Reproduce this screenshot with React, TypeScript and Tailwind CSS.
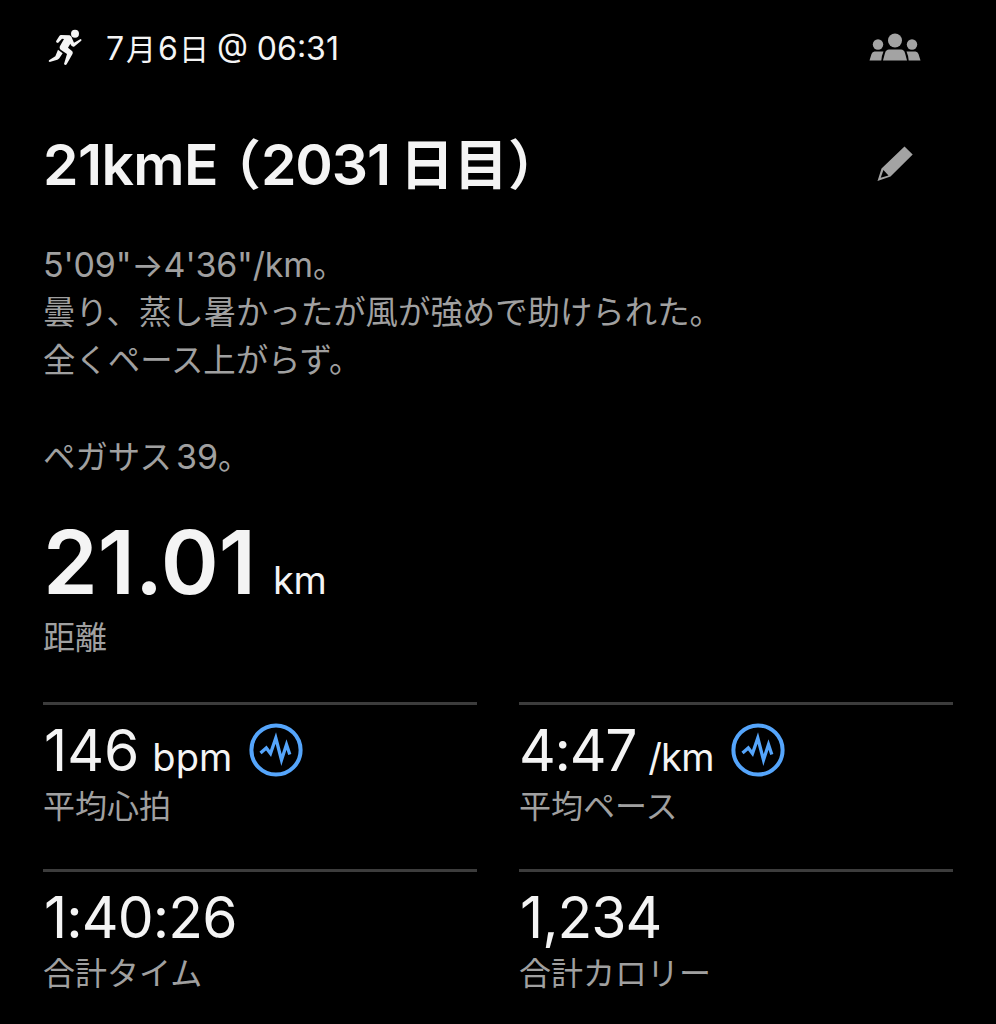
import type { ReactNode } from 'react';

const stats = [
  { id: 1, value: '146', unit: 'bpm', label: '平均心拍', badge: true, valueClass: 'pl-px', unitClass: '-ml-px' },
  { id: 2, value: '4:47', unit: '/km', label: '平均ペース', badge: true, valueClass: 'tracking-[-1.300px]', unitClass: '-ml-[2px] tracking-[-0.700px]' },
  { id: 3, value: '1:40:26', label: '合計タイム', badge: false, valueClass: 'pl-px tracking-[-0.900px]', unitClass: '' },
  { id: 4, value: '1,234', label: '合計カロリー', badge: false, valueClass: 'pl-px tracking-[-1px]', unitClass: '' },
];

function RunnerIcon() {
  return (
    <svg className="w-[34px] h-[36px] shrink-0" viewBox="0 0 102 108" fill="#f4f4f4">
      <circle cx="81" cy="14.500" r="12" />
      <path d="M39 18 L65 19 Q72 22 73 30 L78 41 L98 30 Q103 32 98 37 L78 53 Q73 54 69 49 L67 44 L60 56 L72 66 Q76 70 73 76 L56 106 Q52 110 48 105 L57 75 L38 62 Q33 57 36 51 L48 30 L42 29 L30 42 Q24 42 24 37 L34 21 Q36 18 39 18 Z" />
      <path d="M30 62 L44 73 L34 88 Q32 91 28 92 L5 99 Q0 98 3 94 L22 82 Z" />
    </svg>
  );
}

function PeopleIcon() {
  return (
    <svg className="w-[52px] h-7" viewBox="0 0 52 28" fill="#a3a3a3">
      <circle cx="26" cy="7.500" r="7" />
      <circle cx="9" cy="11.500" r="5.200" />
      <circle cx="43" cy="11.500" r="5.200" />
      <path d="M20 16.500 H32 Q35 16.500 36 20 L38 27.500 H14 L16 20 Q17 16.500 20 16.500 Z" />
      <path d="M5.500 18.500 H14.500 Q12.800 22 12.300 27.500 H.5 L2.500 21 Q3.400 18.500 5.500 18.500 Z" />
      <path d="M46.500 18.500 H37.500 Q39.200 22 39.700 27.500 H51.500 L49.500 21 Q48.600 18.500 46.500 18.500 Z" />
    </svg>
  );
}

function PencilIcon() {
  return (
    <svg className="w-9 h-9" viewBox="0 0 36 36" fill="#a3a3a3">
      <path
        fillRule="evenodd"
        d="M27.500 .5 L35.700 8.500 L13.500 30.500 L.5 35 L4.500 22.500 Z M6.400 24 L3.700 31.700 L11.500 29.600 Z"
      />
    </svg>
  );
}

function PulseBadge() {
  return (
    <svg className="w-[54px] h-[54px] shrink-0 -mt-[3px]" viewBox="0 0 54 54" fill="none" stroke="#55a5fb">
      <circle cx="27" cy="27" r="24.600" strokeWidth="4" />
      <path d="M11.500 30 L17.300 25 L21.500 30.500 L26.800 15 L32.500 37 L37.500 21.500 L40.800 31.500" strokeWidth="3.300" />
    </svg>
  );
}

function NoteLine({ children }: { children?: ReactNode }) {
  return <p className="h-12 leading-[48px] whitespace-nowrap">{children}</p>;
}

export default function App() {
  return (
    <main className="w-[996px] h-[1024px] overflow-hidden bg-black px-[43px] text-[#f4f4f4] font-['Inter','Noto_Sans_CJK_JP',sans-serif]">
      {/* Activity date */}
      <header className="flex h-[94px] items-center justify-between pr-[32px]">
        <div className="flex items-center gap-[24px] pl-[5px]">
          <RunnerIcon />
          <span className="pt-[3px] text-[32px] leading-10 whitespace-nowrap">
            7<span className="text-[30px] ml-[2px] mr-[2px]">月</span>6<span className="text-[30px] ml-px -mr-px">日</span> @ 06:31
          </span>
        </div>
        <PeopleIcon />
      </header>

      {/* Title */}
      <div className="flex h-[140px] items-center justify-between pr-[40px]">
        <h1 className="flex items-baseline pt-[3px] text-[57px] font-semibold leading-[70px] whitespace-nowrap">
          <span className="tracking-[-0.600px]">21kmE</span>
          <span className="text-[54px] ml-[16px] [font-feature-settings:'halt']">（</span>
          <span className="tracking-[-1.100px]">2031</span>
          <span className="text-[54px] ml-[10px] [font-feature-settings:'halt']">日目）</span>
        </h1>
        <PencilIcon />
      </div>

      {/* Notes */}
      <section className="mt-[7px] h-[240px] text-[32.400px] text-[#a0a0a0]">
        <NoteLine>
          <span className="text-[34px] tracking-[-0.180px]">5'09"→4'36"/km</span>。
        </NoteLine>
        <NoteLine>曇り、蒸し暑かったが風が強めで助けられた。</NoteLine>
        <NoteLine>全くペース上がらず。</NoteLine>
        <NoteLine />
        <NoteLine>
          ペガサス<span className="text-[34px] ml-[4px]">39</span>。
        </NoteLine>
      </section>

      {/* Distance */}
      <section className="mt-[32px] h-[189px]">
        <div className="flex items-baseline gap-[17px] h-[105px] leading-[98px]">
          <span className="text-[88px] font-semibold">21.01</span>
          <span className="text-[38px] tracking-[-0.400px]">km</span>
        </div>
        <div className="text-[32px] leading-10 text-[#a0a0a0]">距離</div>
      </section>

      {/* Stats */}
      <div className="grid grid-cols-2 gap-x-[42px]">
        {stats.map((stat) => (
          <div key={stat.id} className="h-[167px] border-t-[3px] border-[#3c3c3c] pt-[10px]">
            <div className="flex h-[72px] items-center gap-[17px]">
              <div className="flex items-baseline gap-[14px]">
                <span className={`text-[57px] leading-[70px] ${stat.valueClass}`}>{stat.value}</span>
                {stat.unit && <span className={`text-[38px] leading-none ${stat.unitClass}`}>{stat.unit}</span>}
              </div>
              {stat.badge && <PulseBadge />}
            </div>
            <div className="text-[32px] leading-10 text-[#a0a0a0] whitespace-nowrap">{stat.label}</div>
          </div>
        ))}
      </div>
    </main>
  );
}
